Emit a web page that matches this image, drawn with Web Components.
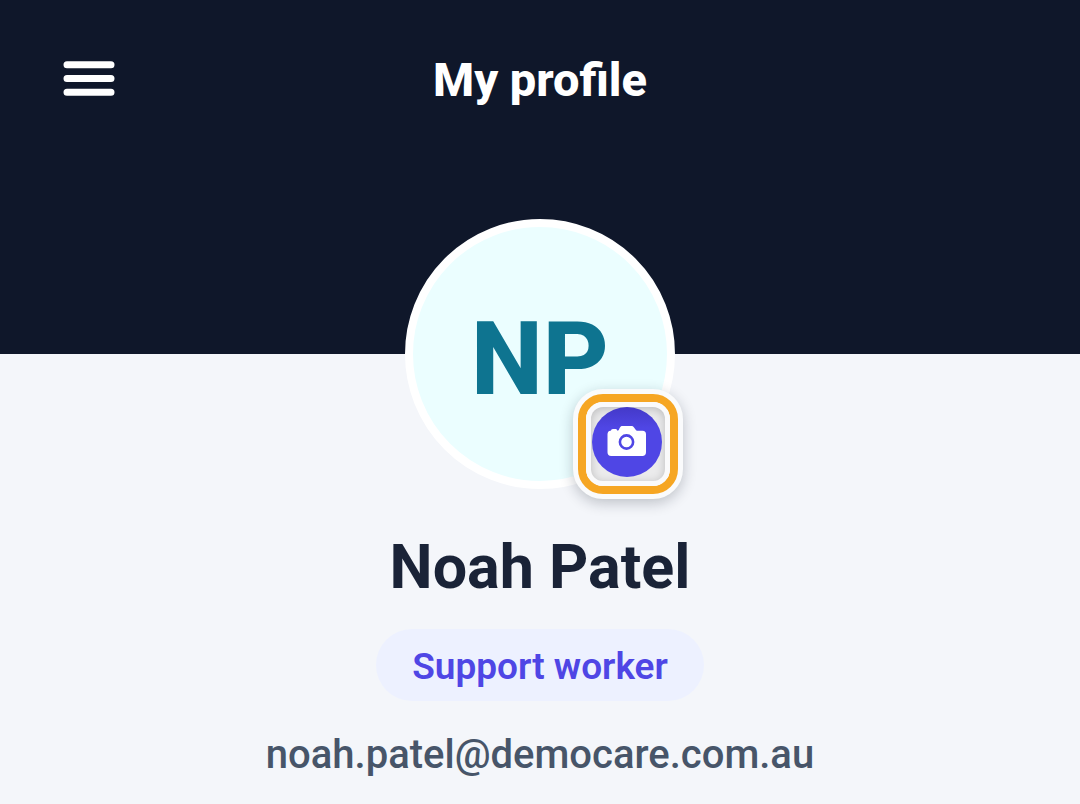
<!DOCTYPE html>
<html lang="en">
<head>
<meta charset="utf-8">
<meta name="viewport" content="width=device-width, initial-scale=1">
<title>My profile</title>
<style>
  html { background: #f4f6fa; }
  body { margin: 0; font-family: Roboto, "Liberation Sans", sans-serif; color: #1a2337; }
</style>
</head>
<body>
<profile-page>
  <app-header slot="header">My profile</app-header>
  <profile-avatar slot="avatar">NP</profile-avatar>
  <profile-name>Noah Patel</profile-name>
  <role-badge>Support worker</role-badge>
  <profile-email address="noah.patel@democare.com.au"></profile-email>
</profile-page>
<script>
  const define = (name, html, ready) => {
    const template = document.createElement('template');
    template.innerHTML = html;
    customElements.define(name, class extends HTMLElement {
      constructor() {
        super();
        this.attachShadow({ mode: 'open' }).append(template.content.cloneNode(true));
      }
      connectedCallback() { if (ready) ready(this); }
    });
  };

  define('app-header', `
    <style>
      :host { display: block; background: #0f172a; color: #fff; }
      header { display: grid; grid-template-columns: 56px 1fr 56px; align-items: start; padding: 48px 61px 242px; }
      button { display: flex; justify-content: center; padding: 12px 0; border: 0; background: none; color: inherit; cursor: pointer; }
      svg { display: block; }
      h1 { margin: 0; font-size: 47px; line-height: 64px; font-weight: 800; text-align: center; }
    </style>
    <header>
      <button type="button" aria-label="Open menu">
        <svg width="52" height="40" viewBox="0 0 52 40" fill="none" stroke="currentColor" stroke-width="7" stroke-linecap="round" aria-hidden="true">
          <path d="M4 4.8H48M4 18.5H48M4 32.3H48"/>
        </svg>
      </button>
      <h1><slot></slot></h1>
    </header>`);

  define('camera-button', `
    <style>
      :host { display: block; }
      button { display: block; padding: 0; border: 5px solid #fafbfc; border-radius: 30px; background: #f7f8f9; box-shadow: 0 4px 14px rgba(15, 23, 42, .24); cursor: pointer; }
      .ring { display: block; border: 8px solid #f6a623; border-radius: 25px; background: #fafafb; }
      .inner { display: block; border: 5px solid #fafafb; border-radius: 17px; }
      .well { display: block; width: 74px; height: 74px; border-radius: 12px; background: #ebebec; box-shadow: inset 0 2px 10px rgba(0, 0, 0, .2); overflow: hidden; }
      .disc { display: flex; align-items: center; justify-content: center; box-sizing: border-box; width: 70px; height: 70px; padding-bottom: 2px; margin-left: 1px; border-radius: 50%; background: linear-gradient(#4439c8, #4f46e5 30%); }
    </style>
    <button type="button" aria-label="Change profile photo">
      <span class="ring"><span class="inner"><span class="well"><span class="disc">
        <svg width="40" height="32" viewBox="0 0 40 32" aria-hidden="true">
          <path fill="#fff" d="M4 5.5C4 4 5.5 4 7.5 4S10 4 10 5.5H11C12 5.5 12 4 13 2.5C13.8 1.2 14.3 1 15.5 1H24C25.5 1 26.2 1.3 27 2.5L28.5 4.5C29 5.5 29.5 5.7 31 5.7H35.5Q39 5.7 39 9.3V27.3Q39 31 35.3 31H4.2Q.5 31 .5 27.3V9.3Q.5 6 3.5 5.7Z"/>
          <circle cx="19.5" cy="17" r="6.6" fill="none" stroke="#4f46e5" stroke-width="2.6"/>
        </svg>
      </span></span></span></span>
    </button>`);

  define('profile-avatar', `
    <style>
      :host { display: block; position: relative; }
      .face { display: flex; align-items: center; justify-content: center; box-sizing: border-box; width: 270px; height: 270px; padding-top: 10px; border: 8px solid #fff; border-radius: 50%; background: #ebfeff; color: #0e7490; font-size: 102px; line-height: 120px; font-weight: 800; }
      camera-button { position: absolute; right: -8px; bottom: -10px; }
    </style>
    <div class="face"><span><slot></slot></span></div>
    <camera-button></camera-button>`);

  define('profile-name', `
    <style>
      :host { display: block; }
      h2 { margin: 0; font-size: 61px; line-height: 72px; font-weight: 700; text-align: center; }
    </style>
    <h2><slot></slot></h2>`);

  define('role-badge', `
    <style>
      :host { display: block; padding: 16px 36px 12px; border-radius: 36px; background: #edf1ff; color: #4f46e5; font-size: 37px; line-height: 44px; font-weight: 600; }
    </style>
    <slot></slot>`);

  define('profile-email', `
    <style>
      :host { display: block; font-size: 40px; line-height: 56px; font-weight: 500; }
      a { color: #475569; text-decoration: none; }
    </style>
    <a></a>`, el => {
      const link = el.shadowRoot.querySelector('a');
      const address = el.getAttribute('address');
      link.href = 'mailto:' + address;
      link.textContent = address;
    });

  define('profile-page', `
    <style>
      :host { display: block; }
      main { display: flex; flex-direction: column; align-items: center; gap: 26px; padding-bottom: 20px; }
      .avatar { margin: -135px 0 16px; }
    </style>
    <slot name="header"></slot>
    <main>
      <div class="avatar"><slot name="avatar"></slot></div>
      <slot></slot>
    </main>`);
</script>
</body>
</html>
